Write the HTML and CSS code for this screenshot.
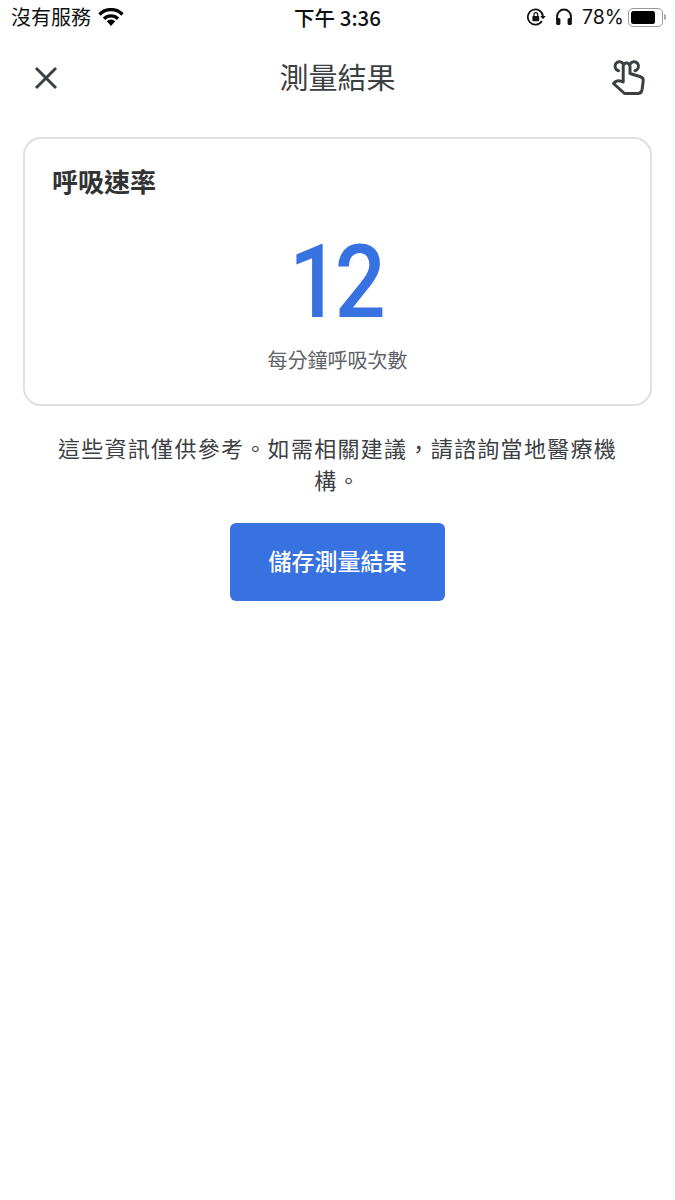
FILE: index.html
```html
<!DOCTYPE html>
<html lang="zh-Hant">
<head>
<meta charset="utf-8">
<title>測量結果</title>
<link rel="stylesheet" href="styles.css">
</head>
<body>
<div class="status">
  <div class="status-left">
    <span>沒有服務</span>
    <svg class="wifi" width="26" height="18" viewBox="0 0 26 18"><path d="M1.500 6.500A16 16 0 0 1 24.500 6.500M6 10.800A9.800 9.800 0 0 1 20 10.800" fill="none" stroke="#000" stroke-width="3.400"/><path d="M8.800 13.300A6 6 0 0 1 17.200 13.300L13 18z"/></svg>
  </div>
  <div class="status-time">下午 3:36</div>
  <div class="status-right">
    <svg width="19" height="18" viewBox="0 0 19 18" class="lock"><path d="M14.900 13A7.600 7.600 0 1 1 16 8.500" fill="none" stroke="#111" stroke-width="1.700"/><path d="M13.300 8h5.400l-2.700 3.200z" fill="#111"/><rect x="5.400" y="8" width="6.800" height="5.200" rx=".8" fill="#111"/><path d="M6.900 8V6.500a1.900 1.900 0 0 1 3.800 0V8" fill="none" stroke="#111" stroke-width="1.200"/></svg>
    <svg width="18" height="18" viewBox="0 0 18 18" class="phones"><path d="M2.100 12V8.500a6.900 6.900 0 0 1 13.800 0V12" fill="none" stroke="#111" stroke-width="2"/><rect x="1.100" y="10" width="4.300" height="7" rx="1.600" fill="#111"/><rect x="12.600" y="10" width="4.300" height="7" rx="1.600" fill="#111"/></svg>
    <span class="pct">78%</span>
    <div class="battery"><div class="battery-fill"></div></div>
    <div class="battery-cap"></div>
  </div>
</div>

<header class="nav">
  <svg width="26" height="26" viewBox="0 0 26 26" class="close"><path d="M3 3l20 20M23 3L3 23" fill="none" stroke="#3c4043" stroke-width="3"/></svg>
  <h1 class="nav-title">測量結果</h1>
  <svg width="36" height="38" viewBox="0 0 36 38" class="hand"><path d="M13.500 5.300A4.500 4.500 0 1 0 8.500 11.700M20 5.300A4.500 4.500 0 1 1 25 11.700M13.200 23V7.500a3.400 3.400 0 0 1 6.800 0V14.500l10.500 3.300c1.800.6 2.900 2.200 2.700 4l-1.100 8.700c-.3 2-1.800 4-4 4H14.500L3.500 24.500l1.500-1.500c2-1.700 5-1.700 8.200 0" fill="none" stroke="#3c4043" stroke-width="3" stroke-linejoin="round" stroke-linecap="round"/></svg>
</header>

<main class="content">
  <section class="card">
    <h2 class="card-title">呼吸速率</h2>
    <div class="value">12</div>
    <div class="unit">每分鐘呼吸次數</div>
  </section>
  <p class="note">這些資訊僅供參考。如需相關建議&#xFF0C;請諮詢當地醫療機構。</p>
  <button class="save">儲存測量結果</button>
</main>
</body>
</html>
```
FILE: styles.css
```css
* { box-sizing: border-box; }
html, body { margin: 0; padding: 0; background: #fff; }
body {
  width: 675px;
  height: 1200px;
  overflow: hidden;
  font-family: "Noto Sans CJK TC", "Noto Sans", sans-serif;
  color: #3c4043;
}
.status {
  height: 34px;
  position: relative;
  display: flex;
  justify-content: space-between;
  align-items: center;
  padding: 0 9px 0 11px;
  color: #111;
  font-size: 20px;
}
.status-left { display: flex; align-items: center; gap: 7px; line-height: 24px; }
.wifi { fill: #000; margin-top: -1px; }
.status-time {
  position: absolute;
  left: 0;
  right: 0;
  text-align: center;
  font-weight: 500;
  font-size: 20.500px;
  line-height: 24px;
}
.status-right { display: flex; align-items: center; }
.lock { margin-right: 9px; }
.phones { margin-right: 9px; }
.pct { font-family: "Inter", sans-serif; font-size: 19.500px; line-height: 24px; margin-right: 4px; }
.battery {
  width: 35px;
  height: 19px;
  border: 1.500px solid #9a9a9a;
  border-radius: 5px;
  padding: 2px;
}
.battery-fill { width: 24px; height: 100%; background: #000; border-radius: 2.500px; }
.battery-cap { width: 2px; height: 6px; background: #aaa; border-radius: 0 2px 2px 0; margin-left: 1px; }
.nav {
  height: 86px;
  padding: 0 29px 0 33px;
  display: grid;
  grid-template-columns: 1fr auto 1fr;
  align-items: center;
}
.nav-title { margin: 0 0 0 -4px; font-size: 29px; font-weight: 400; line-height: 40px; color: #3c4043; margin-top: -2px; }
.close { margin-top: 2px; }
.hand { justify-self: end; margin-top: 2px; }
.content {
  padding: 17px 23px 0;
  display: flex;
  flex-direction: column;
  align-items: center;
}
.card {
  width: 100%;
  height: 269px;
  border: 2px solid #e0e0e0;
  border-radius: 18px;
  padding: 24px 27px 0;
  display: flex;
  flex-direction: column;
}
.card-title { margin: 0; font-size: 26px; line-height: 36px; font-weight: 700; color: #333; }
.value {
  margin-top: 28px;
  text-align: center;
  font-family: "Roboto", sans-serif;
  font-size: 102px;
  font-weight: 500;
  line-height: 110px;
  letter-spacing: -6px;
  padding-right: 6px;
  transform: scaleX(0.88);
  color: #3871e0;
}
.unit { margin-top: 9px; text-align: center; font-size: 20px; line-height: 28px; color: #5f6368; }
.note {
  margin: 25px 0 0;
  width: 565px;
  text-align: center;
  font-size: 22px;
  letter-spacing: 1.300px;
  line-height: 32px;
  color: #3c4043;
}
.save {
  margin-top: 28px;
  width: 215px;
  height: 78px;
  border: 0;
  border-radius: 6px;
  background: #3871e0;
  color: #fff;
  font-family: inherit;
  font-size: 23px;
  font-weight: 500;
  padding: 0 0 5px;
}
```
